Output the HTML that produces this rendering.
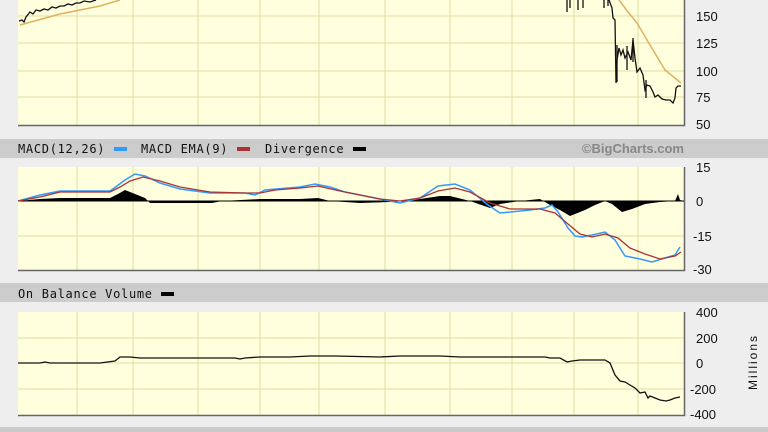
<!DOCTYPE html>
<html><head><meta charset="utf-8"><style>
body{margin:0;width:768px;height:432px;background:#eeeeee;overflow:hidden;font-family:"DejaVu Sans Mono","Liberation Mono",monospace;}
svg{display:block}
</style></head><body>
<svg width="768" height="432" viewBox="0 0 768 432" xmlns="http://www.w3.org/2000/svg">
<rect width="768" height="432" fill="#eeeeee"/>
<rect x="18" y="0" width="666" height="125" fill="#ffffdd"/>
<rect x="18" y="167" width="666" height="103" fill="#ffffdd"/>
<rect x="18" y="312" width="666" height="103" fill="#ffffdd"/>
<g stroke="#dcdca0" stroke-width="1">
<path d="M77 0V125M133 0V125M198 0V125M260 0V125M319 0V125M385 0V125M450 0V125M512 0V125M574 0V125M638 0V125"/>
<path d="M18 16H684M18 43H684M18 71H684M18 97H684"/>
<path d="M77 167V270M133 167V270M198 167V270M260 167V270M319 167V270M385 167V270M450 167V270M512 167V270M574 167V270M638 167V270"/>
<path d="M18 236H684"/>
<path d="M77 312V415M133 312V415M198 312V415M260 312V415M319 312V415M385 312V415M450 312V415M512 312V415M574 312V415M638 312V415"/>
<path d="M18 338H684M18 363H684M18 389H684"/>
</g>
<g fill="none" stroke="#666" stroke-width="1.5">
<path d="M18 125.5H684.5V0"/><path d="M18 270.5H684.5V167"/><path d="M18 415.5H684.5V312"/>
</g>
<rect x="0" y="139" width="768" height="19" fill="#cccccc"/>
<rect x="0" y="283" width="768" height="19" fill="#cccccc"/>
<rect x="0" y="427" width="768" height="5" fill="#cccccc"/>
<g font-size="12" fill="#111" letter-spacing="0.7">
<text x="18" y="153">MACD(12,26)</text>
<rect x="114" y="147" width="13" height="4" fill="#3399ff"/>
<text x="141" y="153">MACD EMA(9)</text>
<rect x="237" y="147" width="13" height="4" fill="#aa3333"/>
<text x="265" y="153">Divergence</text>
<rect x="353" y="147" width="13" height="4" fill="#000"/>
<text x="18" y="298">On Balance Volume</text>
<rect x="161" y="292" width="13" height="4" fill="#000"/>
</g>
<text x="684" y="153" text-anchor="end" font-family="Liberation Sans,sans-serif" font-weight="bold" font-size="13" fill="#888">©BigCharts.com</text>
<g font-family="Liberation Sans,sans-serif" font-size="13" fill="#111">
<text x="696" y="21">150</text><text x="696" y="48">125</text><text x="696" y="76">100</text><text x="696" y="102">75</text><text x="696" y="129">50</text>
<text x="696" y="172">15</text><text x="696" y="206">0</text><text x="693" y="241">-15</text><text x="693" y="274">-30</text>
<text x="696" y="317">400</text><text x="696" y="343">200</text><text x="696" y="368">0</text><text x="690" y="394">-200</text><text x="690" y="419">-400</text>
<text transform="translate(757,390) rotate(-90)" font-size="12" letter-spacing="2">Millions</text>
</g>
<path d="M20 25 L60 14 L100 6 L120 0" fill="none" stroke="#e0b060" stroke-width="1.5"/>
<path d="M619 0 L628 12 L637 23 L650 45 L665 70 L681 83" fill="none" stroke="#e0b060" stroke-width="1.5"/>
<path d="M19 21 L22 20 L24 22 L26 17 L30 12 L33 14 L36 10 L40 11 L44 9 L48 10 L52 7 L56 8 L60 6 L64 6 L68 4 L72 5 L76 3 L80 3 L84 1 L90 2 L96 0" fill="none" stroke="#111" stroke-width="1.3"/>
<g stroke="#111" stroke-width="1.3" fill="none">
<path d="M567 0V12M570 0V8M578 0V10M583 0V8M604 0V8M608 0V6"/>
<path d="M609 0 L612 8 L613 18 L615 20 L616 83 L617 60 L619 48 L621 55 L623 50 L625 58 L628 52 L631 60 L633 40 L635 58 L637 72 L640 68 L643 75 L645 90 L647 85 L650 86 L653 92 L655 97 L658 95 L662 99 L666 100 L670 100 L673 103 L675 98 L676 88 L678 86 L681 86"/>
<path d="M617 45V82M627 46V70M633 38V62M646 80V98"/>
</g>
<path d="M18 201 L40 199 L60 198 L110 198 L118 194 L125 190 L135 194 L145 198 L150 203 L180 203 L200 203 L212 203 L222 201 L260 199 L300 199 L318 198 L330 201 L360 203 L390 202 L400 201 L420 199 L440 196 L450 196 L470 201 L490 208 L500 204 L520 201 L540 199 L550 205 L560 210 L570 216 L585 210 L595 205 L605 201 L612 204 L622 212 L632 209 L645 204 L660 202 L675 201 L678 194 L680 200 L684 201 Z" fill="#000"/>
<path d="M18 201H684" stroke="#000" stroke-width="1"/>
<path d="M18 201 L40 195 L60 191 L110 191 L117 186 L125 180 L135 174 L145 176 L160 183 L180 189 L210 193 L245 193 L255 195 L265 190 L300 187 L315 184 L330 187 L345 192 L380 199 L400 203 L420 198 L438 186 L455 184 L470 190 L488 205 L500 213 L530 210 L545 208 L552 205 L558 212 L568 228 L575 236 L582 237 L592 235 L605 232 L615 240 L625 256 L640 259 L652 262 L665 258 L675 255 L680 247" fill="none" stroke="#3399ff" stroke-width="1.5"/>
<path d="M18 201 L40 197 L60 192 L110 192 L120 187 L130 181 L143 177 L160 181 L180 187 L210 192 L245 193 L260 193 L275 190 L300 188 L318 186 L340 191 L380 199 L400 201 L420 198 L438 191 L455 188 L470 192 L490 203 L510 209 L540 209 L555 213 L568 224 L580 234 L592 237 L605 234 L618 238 L630 248 L645 254 L660 259 L675 256 L681 252" fill="none" stroke="#aa3333" stroke-width="1.3"/>
<path d="M18 363 L40 363 L45 362 L50 363 L100 363 L115 361 L120 357 L130 357 L140 358 L235 358 L240 359 L245 358 L260 357 L290 357 L310 356 L335 356 L380 357 L400 356 L440 356 L460 357 L545 357 L550 358 L560 358 L567 362 L572 361 L580 360 L595 360 L605 360 L610 363 L615 375 L620 381 L625 382 L630 385 L635 388 L640 393 L645 392 L648 398 L650 396 L655 398 L660 400 L666 401 L670 400 L675 398 L680 397" fill="none" stroke="#111" stroke-width="1.3"/>
</svg>
</body></html>
